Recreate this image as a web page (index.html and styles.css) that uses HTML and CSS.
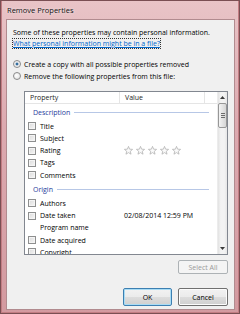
FILE: index.html
```html
<!DOCTYPE html>
<html lang="en">
<head>
    <meta charset="UTF-8">
    <meta name="viewport" content="width=device-width, initial-scale=1.0">
    <title>Remove Properties</title>
    <link rel="stylesheet" href="styles.css">
</head>
<body>
    <div class="window">
        <div class="titlebar">Remove Properties</div>

        <div class="client">
            <p class="intro">Some of these properties may contain personal information.</p>
            <a class="help-link" href="#">What personal information might be in a file?</a>

            <div class="options">
                <label class="option"><span class="radio checked"></span>Create a copy with all possible properties removed</label>
                <label class="option"><span class="radio"></span>Remove the following properties from this file:</label>
            </div>

            <div class="listbox">
                <div class="list-main">
                    <div class="list-head">
                        <div class="head-col prop">Property</div>
                        <div class="head-col value">Value</div>
                        <div class="head-col"></div>
                    </div>

                    <div class="group"><span>Description</span></div>
                    <div class="row"><div class="cell"><span class="check"></span>Title</div><div class="cell"></div></div>
                    <div class="row"><div class="cell"><span class="check"></span>Subject</div><div class="cell"></div></div>
                    <div class="row">
                        <div class="cell"><span class="check"></span>Rating</div>
                        <div class="cell stars">
                            <svg class="star" viewBox="0 0 9 9"><polygon points="4.5,0.4 5.62,3.16 8.59,3.37 6.31,5.29 7.03,8.18 4.5,6.6 1.97,8.18 2.69,5.29 0.41,3.37 3.38,3.16"/></svg>
                            <svg class="star" viewBox="0 0 9 9"><polygon points="4.5,0.4 5.62,3.16 8.59,3.37 6.31,5.29 7.03,8.18 4.5,6.6 1.97,8.18 2.69,5.29 0.41,3.37 3.38,3.16"/></svg>
                            <svg class="star" viewBox="0 0 9 9"><polygon points="4.5,0.4 5.62,3.16 8.59,3.37 6.31,5.29 7.03,8.18 4.5,6.6 1.97,8.18 2.69,5.29 0.41,3.37 3.38,3.16"/></svg>
                            <svg class="star" viewBox="0 0 9 9"><polygon points="4.5,0.4 5.62,3.16 8.59,3.37 6.31,5.29 7.03,8.18 4.5,6.6 1.97,8.18 2.69,5.29 0.41,3.37 3.38,3.16"/></svg>
                            <svg class="star" viewBox="0 0 9 9"><polygon points="4.5,0.4 5.62,3.16 8.59,3.37 6.31,5.29 7.03,8.18 4.5,6.6 1.97,8.18 2.69,5.29 0.41,3.37 3.38,3.16"/></svg>
                        </div>
                    </div>
                    <div class="row"><div class="cell"><span class="check"></span>Tags</div><div class="cell"></div></div>
                    <div class="row"><div class="cell"><span class="check"></span>Comments</div><div class="cell"></div></div>

                    <div class="group"><span>Origin</span></div>
                    <div class="row"><div class="cell"><span class="check"></span>Authors</div><div class="cell"></div></div>
                    <div class="row"><div class="cell"><span class="check"></span>Date taken</div><div class="cell">02/08/2014 12:59 PM</div></div>
                    <div class="row"><div class="cell"><span class="check blank"></span>Program name</div><div class="cell"></div></div>
                    <div class="row"><div class="cell"><span class="check"></span>Date acquired</div><div class="cell"></div></div>
                    <div class="row"><div class="cell"><span class="check"></span>Copyright</div><div class="cell"></div></div>
                </div>

                <div class="scrollbar">
                    <div class="arrow">
                        <svg width="5" height="3" viewBox="0 0 5 3"><polygon points="0,3 2.5,0 5,3" fill="#3b3b3b"/></svg>
                    </div>
                    <div class="thumb"><span class="grip"></span></div>
                    <div class="track"></div>
                    <div class="arrow">
                        <svg width="5" height="3" viewBox="0 0 5 3"><polygon points="0,0 5,0 2.5,3" fill="#3b3b3b"/></svg>
                    </div>
                </div>
            </div>

            <div class="select-row">
                <button class="btn" disabled>Select All</button>
            </div>

            <div class="footer">
                <button class="btn ok">OK</button>
                <button class="btn">Cancel</button>
            </div>
        </div>
    </div>
</body>
</html>
```

FILE: styles.css
```css
* {
    box-sizing: border-box;
}

body {
    margin: 0;
    font-family: "Open Sans", "Noto Sans", sans-serif;
    font-size: 7px;
    color: #000;
}

.window {
    width: 240px;
    height: 314px;
    border: 1px solid #7a4f53;
    background: linear-gradient(to bottom, #e9c4c7 0%, #dcaab0 40%, #d39aa0 100%);
    box-shadow: inset 1px 0 0 #c27d83, inset -1px 0 0 #c27d83, inset 0 -1px 0 #c27d83;
    padding: 0 4px 3px 5px;
    display: flex;
    flex-direction: column;
}

.titlebar {
    height: 18px;
    line-height: 18px;
    padding-left: 1px;
    font-size: 7.5px;
    color: #111;
    text-shadow: 0 0 3px rgba(255, 255, 255, 0.8);
}

.client {
    flex: 1;
    background: #f0f0f0;
    border: 1px solid #b18b8f;
    padding: 8px 6px 0 6px;
    display: flex;
    flex-direction: column;
    overflow: hidden;
}

.intro {
    margin: 0;
    line-height: 10px;
}

.help-link {
    align-self: flex-start;
    line-height: 9px;
    margin-top: 1px;
    color: #0066cc;
    text-decoration: underline;
    outline: 1px dotted #333;
    outline-offset: 0;
}

.options {
    margin-top: 10px;
    display: flex;
    flex-direction: column;
}

.option {
    height: 12px;
    display: flex;
    align-items: center;
    gap: 3px;
}

.radio {
    width: 8px;
    height: 8px;
    border-radius: 50%;
    border: 1px solid #8a8a8a;
    background: radial-gradient(circle at 40% 40%, #ffffff, #dcdcdc);
}

.radio.checked {
    background: radial-gradient(circle, #2a5d8a 0, #3d7cb0 30%, #e8e8e8 40%, #ffffff 100%);
}

/* property list */
.listbox {
    margin: 9px 0 0 11px;
    height: 164px;
    border: 1px solid #828790;
    background: #fff;
    display: flex;
    overflow: hidden;
}

.list-main {
    flex: 1;
    display: flex;
    flex-direction: column;
    min-width: 0;
}

.list-head {
    height: 12px;
    flex-shrink: 0;
    display: grid;
    grid-template-columns: 95px 85px 1fr;
    border-bottom: 1px solid #e5e5e5;
}

.head-col {
    border-right: 1px solid #e5e5e5;
    line-height: 11px;
    color: #1e1e1e;
}

.head-col.prop {
    padding-left: 5px;
}

.head-col.value {
    padding-left: 5px;
}

.head-col:last-child {
    border-right: none;
}

.group {
    height: 16px;
    flex-shrink: 0;
    display: flex;
    align-items: center;
    padding: 0 8px 0 8px;
    color: #1e3c9c;
    gap: 4px;
}

.group::after {
    content: "";
    flex: 1;
    height: 1px;
    background: #b7c7e6;
}

.row {
    height: 12.25px;
    flex-shrink: 0;
    display: grid;
    grid-template-columns: 95px 1fr;
    align-items: center;
}

.cell {
    display: flex;
    align-items: center;
    white-space: nowrap;
}

.cell + .cell {
    padding-left: 4px;
}

.check {
    width: 8px;
    height: 8px;
    margin: 0 4px 0 3px;
    border: 1px solid #8e8f8f;
    background: linear-gradient(135deg, #dadada, #f7f7f7);
    box-shadow: inset 0 0 0 1px #f4f4f4;
}

.check.blank {
    border-color: transparent;
    background: none;
    box-shadow: none;
}

.stars {
    gap: 3px;
}

.star {
    width: 9px;
    height: 9px;
}

.star polygon {
    fill: #fafafa;
    stroke: #b3b3b3;
    stroke-width: 0.8;
}

.scrollbar {
    width: 10px;
    flex-shrink: 0;
    display: flex;
    flex-direction: column;
    background: linear-gradient(to right, #e2e2e2, #f3f3f3 30%, #f3f3f3 70%, #e6e6e6);
    border-left: 1px solid #ececec;
}

.arrow {
    height: 11px;
    display: flex;
    align-items: center;
    justify-content: center;
}

.thumb {
    height: 25px;
    border: 1px solid #979797;
    border-radius: 2px;
    background: linear-gradient(to right, #f4f4f4, #e4e4e4 50%, #d6d6d6);
    display: flex;
    align-items: center;
    justify-content: center;
}

.grip {
    width: 4px;
    height: 5px;
    background: repeating-linear-gradient(to bottom, #6c6c6c 0 1px, transparent 1px 2px);
}

.track {
    flex: 1;
}

/* buttons */
.select-row {
    margin-top: 5px;
    display: flex;
    justify-content: flex-end;
}

.footer {
    margin-top: 14px;
    display: flex;
    justify-content: flex-end;
    gap: 6px;
}

.btn {
    width: 50px;
    height: 14px;
    padding: 0;
    font-family: inherit;
    font-size: 7px;
    color: #000;
    border: 1px solid #707070;
    border-radius: 2px;
    background: linear-gradient(to bottom, #f2f2f2 0%, #ebebeb 50%, #dddddd 51%, #cfcfcf 100%);
    box-shadow: inset 0 0 0 1px #fcfcfc;
}

.footer .btn {
    height: 18px;
}

.btn:disabled {
    color: #9a9a9a;
    border-color: #adb2b5;
    background: #f4f4f4;
    box-shadow: none;
}

.btn.ok {
    width: 49px;
    border-color: #3c7fb1;
    box-shadow: inset 0 0 0 1px #a9dcf5;
}
```
